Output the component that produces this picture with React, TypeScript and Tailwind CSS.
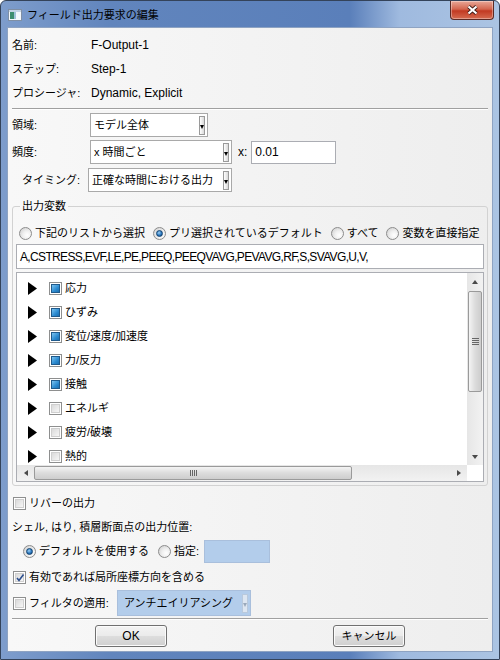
import React from 'react';

const Radio = ({ on }: { on?: boolean }) => (
  <span className="w-[13px] h-[13px] shrink-0 rounded-full border border-[#8c8c8c] bg-[radial-gradient(circle_at_65%_65%,#ffffff_0%,#f0f0f0_40%,#c9c9c9_100%)] flex items-center justify-center">
    {on && (
      <span className="w-[7px] h-[7px] rounded-full border border-[#12426f] bg-[radial-gradient(circle_at_40%_35%,#9fd0f3_0%,#2a78c0_55%,#0f3f75_100%)]" />
    )}
  </span>
);

const Check = ({ state }: { state?: 'fill' | 'tick' }) => (
  <span className="w-[13px] h-[13px] shrink-0 border border-[#8e8f8f] bg-white p-[1px] flex relative">
    {state === 'fill' ? (
      <span className="flex-1 border border-[#1f5a8c] bg-[linear-gradient(135deg,#7cc4f0_0%,#2b8ad0_60%,#1b6fb0_100%)]" />
    ) : (
      <span className="flex-1 border border-[#cfcfcf] bg-[linear-gradient(135deg,#dadada_0%,#f6f6f6_100%)]" />
    )}
    {state === 'tick' && (
      <svg className="absolute left-[1px] top-[1px]" width="10" height="10" viewBox="0 0 10 10">
        <path d="M2 5 L4 7.5 L8.5 1.5" fill="none" stroke="#2d4f8e" strokeWidth="1.6" />
      </svg>
    )}
  </span>
);

const ComboArrow = ({ disabled }: { disabled?: boolean }) => (
  <span
    className={`ml-auto mr-[2px] w-[6px] h-[19px] shrink-0 border flex items-end justify-center pb-[5px] ${
      disabled ? 'border-[#b9c9dc] bg-[#dde6f1]' : 'border-[#9a9a9a] bg-[linear-gradient(to_right,#ffffff,#d9d9d9)]'
    }`}
  >
    <span className={`border-x-[2px] border-x-transparent border-t-[4px] ${disabled ? 'border-t-[#9aa9bb]' : 'border-t-black'}`} />
  </span>
);

const Combo = ({ text, className }: { text: string; className: string }) => (
  <div className={`h-full flex items-center border border-[#a9a9a9] bg-white pl-[3px] text-[11px] ${className}`}>
    <span className="whitespace-nowrap">{text}</span>
    <ComboArrow />
  </div>
);

const TreeRow = ({ label, on }: { label: string; on?: boolean }) => (
  <div className="h-[24px] shrink-0 flex items-center">
    <svg width="9" height="13" viewBox="0 0 9 13" className="shrink-0">
      <polygon points="0,0 9,6.5 0,13" fill="#000" />
    </svg>
    <span className="ml-[12px]">
      <Check state={on ? 'fill' : undefined} />
    </span>
    <span className="ml-[3px] text-[11px] whitespace-nowrap">{label}</span>
  </div>
);

const InfoRow = ({ label, value }: { label: string; value: string }) => (
  <div className="h-[24px] flex items-center">
    <span className="w-[79px] text-[11px]">{label}</span>
    <span className="text-[12px]">{value}</span>
  </div>
);

const Button = ({ children, className }: { children: React.ReactNode; className: string }) => (
  <button
    className={`w-[72px] h-[22px] rounded-[3px] border border-[#707070] bg-[linear-gradient(#f3f3f3_0%,#ebebeb_48%,#dddddd_52%,#cfcfcf_100%)] shadow-[inset_0_0_0_1px_#fbfbfb] flex items-center justify-center ${className}`}
  >
    {children}
  </button>
);

export default function App() {
  return (
    <div className="w-[500px] h-[660px] bg-white font-['Liberation_Sans','Noto_Sans_CJK_JP',sans-serif] text-black">
      <div className="w-full h-full flex flex-col rounded-t-[6px] border border-[#34435a] bg-[linear-gradient(to_right,#7e9dcc_0%,#6185bd_22%,#5a7fba_70%,#9fbadf_80%,#abc4e3_100%)]">
        {/* title bar */}
        <div className="h-[26px] shrink-0 flex items-start">
          <svg className="ml-[7px] mt-[8px] shrink-0" width="14" height="12" viewBox="0 0 14 12">
            <rect x="0.5" y="0.5" width="13" height="11" fill="#f4f8fb" stroke="#7f8fa5" />
            <rect x="1" y="1" width="12" height="2" fill="#c4d4e6" />
            <rect x="2" y="3" width="4" height="7" fill="#3d8e6f" />
            <rect x="6" y="3" width="2" height="7" fill="#9fc3d8" />
          </svg>
          <span className="ml-[5px] mt-[6px] text-[11px] leading-[16px]">フィールド出力要求の編集</span>
          <div className="ml-auto mr-[5px] w-[44px] h-[19px] rounded-b-[4px] border border-t-0 border-[#5c2a24] bg-[linear-gradient(#e9a898_0%,#d4664f_45%,#c23a22_55%,#d66b50_100%)] shadow-[inset_0_0_0_1px_rgba(255,255,255,0.35)] flex items-center justify-center">
            <svg width="13" height="10" viewBox="0 0 13 10">
              <path d="M2.5 1.5 L10.5 8.5 M10.5 1.5 L2.5 8.5" stroke="#3c1a14" strokeWidth="3.8" />
              <path d="M2.5 1.5 L10.5 8.5 M10.5 1.5 L2.5 8.5" stroke="#ffffff" strokeWidth="2.2" />
            </svg>
          </div>
        </div>

        {/* client area */}
        <div className="mx-[6px] mb-[7px] flex-1 flex flex-col border border-[#8ea3c2] bg-[linear-gradient(to_right,#f8f8f8,#eeeeee)] px-[4px]">
          <div className="pt-[5px] flex flex-col">
            <InfoRow label="名前:" value="F-Output-1" />
            <InfoRow label="ステップ:" value="Step-1" />
            <InfoRow label="プロシージャ:" value="Dynamic, Explicit" />
          </div>
          <div className="mt-[3px] h-[2px] border-t border-[#a0a0a0] border-b border-b-white" />

          <div className="mt-[3px] h-[24px] flex items-center">
            <span className="w-[78px] text-[11px]">領域:</span>
            <Combo text="モデル全体" className="w-[118px]" />
          </div>
          <div className="mt-[3px] h-[24px] flex items-center">
            <span className="w-[78px] text-[11px]">頻度:</span>
            <Combo text="x 時間ごと" className="w-[142px]" />
            <span className="ml-[6px] text-[12px]">x:</span>
            <div className="ml-[4px] w-[85px] h-[23px] border border-[#abadb3] bg-white pl-[3px] flex items-center text-[12px]">
              0.01
            </div>
          </div>
          <div className="mt-[4px] h-[24px] flex items-center">
            <span className="w-[76px] pl-[10px] text-[11px] whitespace-nowrap">タイミング:</span>
            <Combo text="正確な時間における出力" className="w-[144px]" />
          </div>

          {/* output variables group */}
          <fieldset className="mt-[7px] border border-[#d2d2d2] rounded-[3px] px-[3px] pb-[3px]">
            <legend className="ml-[4px] px-[2px] text-[11px] leading-[14px]">出力変数</legend>
            <div className="mt-[9px] h-[22px] flex items-center pl-[3px] text-[11px] whitespace-nowrap">
              <Radio />
              <span className="ml-[3px]">下記のリストから選択</span>
              <span className="ml-[8px]"><Radio on /></span>
              <span className="ml-[3px]">プリ選択されているデフォルト</span>
              <span className="ml-[8px]"><Radio /></span>
              <span className="ml-[3px]">すべて</span>
              <span className="ml-[8px]"><Radio /></span>
              <span className="ml-[3px]">変数を直接指定</span>
            </div>
            <div className="h-[25px] border border-[#abadb3] bg-white pl-[3px] flex items-center text-[12px] tracking-[-0.65px] whitespace-nowrap overflow-hidden">
              A,CSTRESS,EVF,LE,PE,PEEQ,PEEQVAVG,PEVAVG,RF,S,SVAVG,U,V,
            </div>

            {/* tree */}
            <div className="mt-[3px] h-[210px] border border-[#abadb3] bg-white flex flex-col">
              <div className="flex-1 flex min-h-0">
                <div className="flex-1 flex flex-col overflow-hidden pl-[11px] pt-[3px]">
                  <TreeRow label="応力" on />
                  <TreeRow label="ひずみ" on />
                  <TreeRow label="変位/速度/加速度" on />
                  <TreeRow label="力/反力" on />
                  <TreeRow label="接触" on />
                  <TreeRow label="エネルギ" />
                  <TreeRow label="疲労/破壊" />
                  <TreeRow label="熱的" />
                </div>
                {/* vertical scrollbar */}
                <div className="w-[16px] flex flex-col bg-[linear-gradient(to_right,#e6e6e6,#f2f2f2)]">
                  <div className="h-[17px] flex items-center justify-center">
                    <span className="border-x-[3.5px] border-x-transparent border-b-[4px] border-b-[#4a4a4a]" />
                  </div>
                  <div className="flex-1 px-[1px] pt-[1px]">
                    <div className="h-[101px] rounded-[2px] border border-[#9a9a9a] bg-[linear-gradient(to_right,#f4f4f4,#dcdcdc_50%,#cdcdcd)] flex flex-col items-center justify-center gap-[1px]">
                      <span className="w-[7px] h-[1px] bg-[#666]" />
                      <span className="w-[7px] h-[1px] bg-[#666]" />
                      <span className="w-[7px] h-[1px] bg-[#666]" />
                      <span className="w-[7px] h-[1px] bg-[#666]" />
                    </div>
                  </div>
                  <div className="h-[17px] flex items-center justify-center">
                    <span className="border-x-[3.5px] border-x-transparent border-t-[4px] border-t-[#4a4a4a]" />
                  </div>
                </div>
              </div>
              {/* horizontal scrollbar */}
              <div className="h-[16px] flex">
                <div className="flex-1 flex bg-[linear-gradient(#e6e6e6,#f2f2f2)]">
                  <div className="w-[17px] flex items-center justify-center">
                    <span className="border-y-[3.5px] border-y-transparent border-r-[4px] border-r-[#4a4a4a]" />
                  </div>
                  <div className="flex-1 py-[1px]">
                    <div className="w-[318px] h-full rounded-[2px] border border-[#9a9a9a] bg-[linear-gradient(#f4f4f4,#dcdcdc_50%,#cdcdcd)] flex items-center justify-center gap-[1px]">
                      <span className="w-[1px] h-[6px] bg-[#666]" />
                      <span className="w-[1px] h-[6px] bg-[#666]" />
                      <span className="w-[1px] h-[6px] bg-[#666]" />
                      <span className="w-[1px] h-[6px] bg-[#666]" />
                    </div>
                  </div>
                  <div className="w-[17px] flex items-center justify-center">
                    <span className="border-y-[3.5px] border-y-transparent border-l-[4px] border-l-[#4a4a4a]" />
                  </div>
                </div>
                <div className="w-[16px] bg-white" />
              </div>
            </div>
          </fieldset>

          <div className="mt-[5px] h-[24px] flex items-center pl-[1px] text-[11px]">
            <Check />
            <span className="ml-[3px]">リバーの出力</span>
          </div>
          <div className="h-[24px] flex items-center text-[11px]">シェル, はり, 積層断面点の出力位置:</div>
          <div className="h-[24px] flex items-center pl-[11px] text-[11px] whitespace-nowrap">
            <Radio on />
            <span className="ml-[3px]">デフォルトを使用する</span>
            <span className="ml-[9px]"><Radio /></span>
            <span className="ml-[3px]">指定:</span>
            <div className="ml-[5px] w-[66px] h-[23px] border border-[#a9bfdc] bg-[#b3cdeb]" />
          </div>
          <div className="mt-[2px] h-[24px] flex items-center pl-[1px] text-[11px]">
            <Check state="tick" />
            <span className="ml-[3px]">有効であれば局所座標方向を含める</span>
          </div>
          <div className="mt-[1px] h-[26px] flex items-center pl-[1px] text-[11px]">
            <Check />
            <span className="ml-[3px] w-[88px]">フィルタの適用:</span>
            <div className="h-full w-[134px] flex items-center border border-[#a9bfdc] bg-[#b3cdeb] pl-[6px]">
              <span className="whitespace-nowrap">アンチエイリアシング</span>
              <ComboArrow disabled />
            </div>
          </div>
          <div className="mt-[2px] h-[2px] border-t border-[#a0a0a0] border-b border-b-white" />
          <div className="mt-[5px] flex justify-around">
            <Button className="text-[12px]">OK</Button>
            <Button className="text-[11px]">キャンセル</Button>
          </div>
        </div>
      </div>
    </div>
  );
}
